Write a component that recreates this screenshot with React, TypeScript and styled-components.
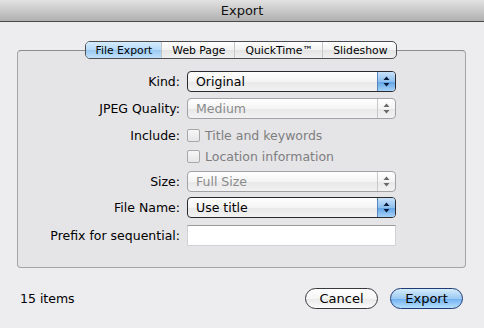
import React from 'react'
import styled, { createGlobalStyle } from 'styled-components'

const GlobalStyle = createGlobalStyle`
  html, body {
    margin: 0;
    padding: 0;
    background: #edecef;
  }
  body {
    font-family: "DejaVu Sans", "Liberation Sans", sans-serif;
    font-size: 12.5px;
    color: #000;
  }
`

function Arrows({ active }: { active?: boolean }) {
  const c = active ? '#0a1a3a' : '#6a6a6a'
  return (
    <svg width="7" height="11" viewBox="0 0 7 11">
      <path d="M3.5 0.5 L6.5 4 L0.5 4 Z" fill={c} />
      <path d="M3.5 10.5 L6.5 7 L0.5 7 Z" fill={c} />
    </svg>
  )
}

function App() {
  return (
    <>
      <GlobalStyle />
      <Window>
        <TitleBar>Export</TitleBar>
        <Body>
          <GroupBox>
            <Tabs>
              <Tab $selected>File Export</Tab>
              <Tab>Web Page</Tab>
              <Tab>QuickTime™</Tab>
              <Tab $last>Slideshow</Tab>
            </Tabs>

            <Form>
              <Row $top={12}>
                <Label>Kind:</Label>
                <Select $active>
                  <SelectText>Original</SelectText>
                  <ArrowBox $active><Arrows active /></ArrowBox>
                </Select>
              </Row>
              <Row $top={6}>
                <Label>JPEG Quality:</Label>
                <Select>
                  <SelectText $disabled>Medium</SelectText>
                  <ArrowBox><Arrows /></ArrowBox>
                </Select>
              </Row>
              <Row $top={6}>
                <Label>Include:</Label>
                <Check>
                  <Box />
                  <CheckText>Title and keywords</CheckText>
                </Check>
              </Row>
              <Row $top={0}>
                <span />
                <Check>
                  <Box />
                  <CheckText>Location information</CheckText>
                </Check>
              </Row>
              <Row $top={4}>
                <Label>Size:</Label>
                <Select>
                  <SelectText $disabled>Full Size</SelectText>
                  <ArrowBox><Arrows /></ArrowBox>
                </Select>
              </Row>
              <Row $top={5}>
                <Label>File Name:</Label>
                <Select $active>
                  <SelectText>Use title</SelectText>
                  <ArrowBox $active><Arrows active /></ArrowBox>
                </Select>
              </Row>
              <Row $top={7}>
                <Label>Prefix for sequential:</Label>
                <TextInput />
              </Row>
            </Form>
          </GroupBox>

          <Footer>
            <Count>15 items</Count>
            <Buttons>
              <PushButton>Cancel</PushButton>
              <PushButton $default>Export</PushButton>
            </Buttons>
          </Footer>
        </Body>
      </Window>
    </>
  )
}

const Window = styled.div`
  width: 484px;
  height: 328px;
  display: flex;
  flex-direction: column;
  background: #edecef;
  overflow: hidden;
`
const TitleBar = styled.div`
  height: 21px;
  flex: none;
  display: flex;
  align-items: center;
  justify-content: center;
  font-size: 13px;
  color: #111;
  background: linear-gradient(#e2e2e2, #b0b0b0);
  border-bottom: 1px solid #4a4a4a;
`
const Body = styled.div`
  flex: 1;
  display: flex;
  flex-direction: column;
  padding: 28px 18px 0 17px;
`
const GroupBox = styled.div`
  height: 218px;
  box-sizing: border-box;
  background: #e5e4e7;
  border: 1px solid #a4a4a6;
  border-top-color: #8c8c8c;
  border-radius: 4px;
  display: flex;
  flex-direction: column;
`
const Tabs = styled.div`
  align-self: center;
  margin-top: -10px;
  margin-left: -1px;
  display: flex;
  height: 18px;
  box-sizing: border-box;
  border: 1px solid #4e4e52;
  border-radius: 5px;
  overflow: hidden;
  background: linear-gradient(#ffffff, #f2f2f2 50%, #e4e4e4 51%, #f0f0f0);
`
const Tab = styled.div<{ $selected?: boolean; $last?: boolean }>`
  display: flex;
  align-items: center;
  padding: 0 9px 0 10px;
  font-size: 10.8px;
  color: #000;
  border-right: ${p => (p.$last ? 'none' : '1px solid #c6c6c6')};
  background: ${p =>
    p.$selected
      ? 'linear-gradient(#d6ecfd, #b4d9f8 50%, #98c8f2 51%, #c2e2fb)'
      : 'transparent'};
`
const Form = styled.div`
  display: flex;
  flex-direction: column;
`
const Row = styled.div<{ $top: number }>`
  display: grid;
  grid-template-columns: 162px 209px;
  column-gap: 7px;
  align-items: center;
  height: 21px;
  margin-top: ${p => p.$top}px;
`
const Label = styled.div`
  text-align: right;
  white-space: nowrap;
`
const Select = styled.div<{ $active?: boolean }>`
  height: 21px;
  box-sizing: border-box;
  display: flex;
  align-items: stretch;
  border: 1px solid ${p => (p.$active ? '#2a2a2e' : '#a2a2a6')};
  border-radius: 4px;
  overflow: hidden;
  background: linear-gradient(#ffffff, #f4f4f4 50%, #e8e8e8 51%, #f2f2f2);
`
const SelectText = styled.div<{ $disabled?: boolean }>`
  flex: 1;
  display: flex;
  align-items: center;
  padding-left: 8px;
  color: ${p => (p.$disabled ? '#8a8a8c' : '#000')};
`
const ArrowBox = styled.div<{ $active?: boolean }>`
  width: 17px;
  display: flex;
  align-items: center;
  justify-content: center;
  border-left: 1px solid ${p => (p.$active ? '#5a86c0' : '#c8c8ca')};
  background: ${p =>
    p.$active
      ? 'linear-gradient(#c8e2fb, #8fc0ee 50%, #5fa3e6 51%, #a6d2f7)'
      : 'transparent'};
`
const Check = styled.div`
  display: flex;
  align-items: center;
  gap: 5px;
`
const Box = styled.div`
  width: 13px;
  height: 13px;
  box-sizing: border-box;
  border: 1px solid #a8a8aa;
  border-radius: 2px;
  background: linear-gradient(#f6f6f6, #e6e6e8);
`
const CheckText = styled.span`
  color: #7e7e80;
`
const TextInput = styled.div`
  height: 21px;
  box-sizing: border-box;
  background: #fff;
  border: 1px solid #d2d2d4;
  border-top-color: #9a9a9c;
`
const Footer = styled.div`
  display: flex;
  align-items: center;
  justify-content: space-between;
  margin-top: 20px;
  padding: 0 3px 0 3px;
`
const Count = styled.div`
  font-size: 12.5px;
`
const Buttons = styled.div`
  display: flex;
  gap: 12px;
`
const PushButton = styled.div<{ $default?: boolean }>`
  width: 73px;
  height: 21px;
  box-sizing: border-box;
  display: flex;
  align-items: center;
  justify-content: center;
  border-radius: 11px;
  font-size: 13px;
  border: 1px solid ${p => (p.$default ? '#1f3b78' : '#3a3a3e')};
  background: ${p =>
    p.$default
      ? 'linear-gradient(#d4ebfc, #9ccaf3 50%, #6eaff0 51%, #b6e0fd)'
      : 'linear-gradient(#ffffff, #f6f6f6 50%, #e9e9e9 51%, #fbfbfb)'};
`

export default App
